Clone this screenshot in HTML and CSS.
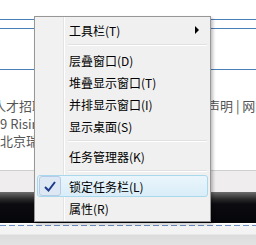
FILE: index.html
```html
<!DOCTYPE html>
<html lang="zh-CN">
<head>
    <meta charset="UTF-8">
    <title>任务栏菜单</title>
    <link rel="stylesheet" href="styles.css">
</head>
<body>
    <div class="page">
        <div class="nav-bar"></div>
        <div class="rule"></div>

        <div class="content">
            <div class="row">
                <span class="cut-left">人才招聘</span>
                <span class="right-links">声明 | 网站</span>
            </div>
            <div class="row">9 Rising</div>
            <div class="row">北京瑞星</div>
        </div>

        <div class="status-band"></div>
        <div class="taskbar"></div>
        <div class="dash-line"></div>
        <div class="bottom-band"></div>
    </div>

    <div class="menu">
        <div class="menu-item">
            <span>工具栏(T)</span>
            <span class="arrow"></span>
        </div>
        <div class="sep"></div>
        <div class="menu-item">层叠窗口(D)</div>
        <div class="menu-item">堆叠显示窗口(T)</div>
        <div class="menu-item">并排显示窗口(I)</div>
        <div class="menu-item">显示桌面(S)</div>
        <div class="sep"></div>
        <div class="menu-item">任务管理器(K)</div>
        <div class="sep"></div>
        <div class="menu-item checked">
            <span class="check">
                <svg width="12" height="11" viewBox="0 0 12 11">
                    <path d="M1 6 L4.5 9.5 L11 1" fill="none" stroke="#1d3a8a" stroke-width="2"/>
                </svg>
            </span>
            <span>锁定任务栏(L)</span>
        </div>
        <div class="menu-item">属性(R)</div>
    </div>
</body>
</html>
```

FILE: styles.css
```css
* {
    margin: 0;
    padding: 0;
    box-sizing: border-box;
}

body {
    width: 256px;
    height: 245px;
    overflow: hidden;
    background: #fff;
    font-family: "Noto Sans CJK SC", "Noto Sans", sans-serif;
    position: relative;
}

.page {
    display: flex;
    flex-direction: column;
    height: 245px;
}

.nav-bar {
    margin-top: 19px;
    height: 10px;
    border-top: 1px solid #4a80b8;
    border-bottom: 1px solid #4a80b8;
}

.rule {
    margin-top: 40px;
    border-top: 1px solid #4a80b8;
}

.content {
    padding-top: 27px;
    height: 100px;
    font-size: 13px;
    color: #555;
}

.row {
    display: flex;
    height: 17.5px;
    line-height: 17.5px;
    white-space: nowrap;
}

.cut-left {
    margin-left: -7px;
}

.right-links {
    margin-left: 162px;
}

.status-band {
    height: 22px;
    background: #efeded;
    border-top: 1px solid #cfcfcf;
}

.taskbar {
    height: 31px;
    background: linear-gradient(#6e6e6e 0px, #2a2a2a 7px, #0c0c10 12px, #05060a 100%);
}

.dash-line {
    height: 5px;
    background: #f4f4f4;
    border-top: 1px solid #fff;
    background-image: repeating-linear-gradient(90deg, #6a8fc5 0 6px, transparent 6px 9px);
    background-size: 100% 1px;
    background-repeat: no-repeat;
    background-position: 0 1px;
}

.bottom-band {
    flex: 1;
    background: linear-gradient(#f3f3f3 0px, #f3f3f3 6px, #dcdcdc 7px, #e2e2e2 100%);
}

.menu {
    position: absolute;
    left: 34px;
    top: 16px;
    width: 177px;
    height: 206px;
    padding: 2px 2px;
    background: linear-gradient(90deg, #f1f1f1 0, #f1f1f1 28px, #e2e3e3 28px, #e2e3e3 29px, #fff 29px, #fff 30px, #f0f0f0 30px);
    border: 1px solid #979797;
    box-shadow: 2px 2px 3px rgba(0, 0, 0, 0.25);
    font-size: 12px;
    color: #000;
}

.menu-item {
    position: relative;
    display: flex;
    align-items: center;
    height: 22px;
    padding-left: 31px;
    border: 1px solid transparent;
    border-radius: 3px;
}

.arrow {
    margin-left: auto;
    margin-right: 8px;
    width: 0;
    height: 0;
    border-top: 4px solid transparent;
    border-bottom: 4px solid transparent;
    border-left: 4px solid #000;
}

.sep {
    height: 8px;
    margin-left: 31px;
    margin-right: 1px;
    background: linear-gradient(#f0f0f0 3px, #e0e0e0 3px, #e0e0e0 4px, #fff 4px, #fff 5px, #f0f0f0 5px);
}

.menu-item.checked {
    border-color: #a8d8eb;
    background: linear-gradient(#eaf5fb, #d9edf8);
}

.check {
    position: absolute;
    left: 1px;
    top: 0;
    width: 22px;
    height: 20px;
    display: flex;
    align-items: center;
    justify-content: center;
    border: 1px solid #b6cce6;
    border-radius: 3px;
    background: #dde8f4;
}
```
